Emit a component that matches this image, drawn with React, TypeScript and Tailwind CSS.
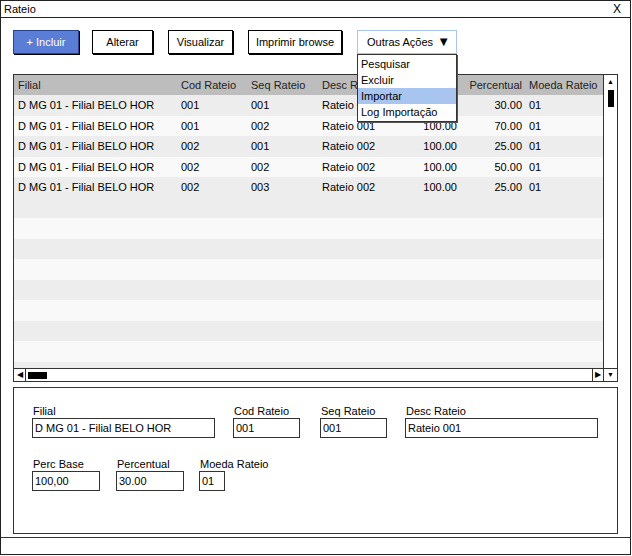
import React from "react";

const rows = [
  ["D MG 01 - Filial BELO HOR", "001", "001", "Rateio 001", "100.00", "30.00", "01"],
  ["D MG 01 - Filial BELO HOR", "001", "002", "Rateio 001", "100.00", "70.00", "01"],
  ["D MG 01 - Filial BELO HOR", "002", "001", "Rateio 002", "100.00", "25.00", "01"],
  ["D MG 01 - Filial BELO HOR", "002", "002", "Rateio 002", "100.00", "50.00", "01"],
  ["D MG 01 - Filial BELO HOR", "002", "003", "Rateio 002", "100.00", "25.00", "01"],
];

const cols = "grid grid-cols-[163px_70px_71px_70px_72px_65px_83px]";

function Cells({ r }: { r: string[] }) {
  return (
    <>
      <div className="pl-1 whitespace-nowrap overflow-hidden">{r[0]}</div>
      <div className="pl-1">{r[1]}</div>
      <div className="pl-1">{r[2]}</div>
      <div className="pl-1 whitespace-nowrap">{r[3]}</div>
      <div className="pr-[3px] text-right">{r[4]}</div>
      <div className="pr-[3px] text-right">{r[5]}</div>
      <div className="pl-1 whitespace-nowrap">{r[6]}</div>
    </>
  );
}

function Btn({ label, w }: { label: string; w: string }) {
  return (
    <div className={`${w} h-6 flex items-center justify-center border border-black bg-white shadow-[1px_1px_0_#000] whitespace-nowrap`}>
      {label}
    </div>
  );
}

function Field({ label, value, w }: { label: string; value: string; w: string }) {
  return (
    <div className="flex flex-col">
      <span className="pl-[1px] leading-[14px]">{label}</span>
      <div className={`${w} h-5 border border-[#333] px-[2px] flex items-center`}>{value}</div>
    </div>
  );
}

export default function App() {
  const empty = Array.from({ length: 9 });
  return (
    <div
      className="relative w-[632px] h-[556px] bg-white text-[11px] text-black"
      style={{ fontFamily: '"Liberation Sans", Arial, sans-serif' }}
    >
      <div className="w-[631px] h-[555px] border border-[#222] flex flex-col">
        {/* title */}
        <div className="h-[17px] border-b border-[#222] flex items-center justify-between pl-[3px] pr-[9px] shrink-0">
          <span>Rateio</span>
          <span className="text-[12px]">X</span>
        </div>

        {/* toolbar */}
        <div className="flex items-start pl-[12px] pt-[12px] h-[56px] shrink-0">
          <div className="h-6 w-[66px] flex items-center justify-center bg-[#5a7ed6] text-white border border-[#27428f] shadow-[1px_1px_0_#000]">
            + Incluir
          </div>
          <div className="ml-[13px]">
            <Btn label="Alterar" w="w-[61px]" />
          </div>
          <div className="ml-[15px]">
            <Btn label="Visualizar" w="w-[65px]" />
          </div>
          <div className="ml-[15px]">
            <Btn label="Imprimir browse" w="w-[94px]" />
          </div>
          <div className="ml-[15px] h-6 w-[100px] border border-[#a8c3ee] bg-white flex items-center justify-between pl-[9px] pr-[6px] whitespace-nowrap">
            <span>Outras Ações</span>
            <span className="text-[13px]">▼</span>
          </div>
        </div>

        {/* grid */}
        <div className="mx-[12px] h-[308px] border border-[#333] flex flex-col shrink-0">
          <div className="flex flex-1 min-h-0">
            <div className="flex-1 flex flex-col overflow-hidden">
              <div className={`${cols} h-5 items-center bg-[#bdbdbd] text-[#222] shrink-0`}>
                <Cells r={["Filial", "Cod Rateio", "Seq Rateio", "Desc Rateio", "Perc Base", "Percentual", "Moeda Rateio"]} />
              </div>
              {rows.map((r, i) => (
                <div
                  key={i}
                  className={`${cols} h-[20.5px] items-center shrink-0 ${i % 2 === 0 ? "bg-[#ededed]" : "bg-[#f9f9f9]"}`}
                >
                  <Cells r={r} />
                </div>
              ))}
              {empty.map((_, i) => (
                <div
                  key={i}
                  className={`h-[20.5px] shrink-0 ${i % 2 === 0 ? "bg-[#ededed]" : "bg-[#f9f9f9]"}`}
                />
              ))}
            </div>
            {/* vertical scrollbar */}
            <div className="w-[14px] border-l border-[#333] flex flex-col items-center bg-white shrink-0">
              <span className="text-[7px] leading-[12px] mt-[1px]">▲</span>
              <div className="w-[6px] h-[17px] bg-black mt-[2px]" />
            </div>
          </div>
          {/* horizontal scrollbar */}
          <div className="h-[13px] border-t border-[#333] flex shrink-0">
            <div className="flex-1 flex items-center bg-white">
              <span className="text-[8px] w-[12px] border-r border-[#333] h-full flex items-center justify-center">◀</span>
              <div className="w-[19px] h-[7px] bg-black ml-[2px]" />
              <div className="flex-1" />
              <span className="text-[8px] w-[11px] border-l border-[#333] h-full flex items-center justify-center">▶</span>
            </div>
            <div className="w-[14px] border-l border-[#333] flex items-center justify-center text-[7px]">▼</div>
          </div>
        </div>

        {/* detail */}
        <div className="mx-[12px] mt-[5px] h-[147px] border border-[#333] shrink-0 pl-[18px] pt-[16px] flex flex-col gap-[19px]">
          <div className="flex">
            <Field label="Filial" value="D MG 01 - Filial BELO HOR" w="w-[183px]" />
            <div className="ml-[18px]">
              <Field label="Cod Rateio" value="001" w="w-[67px]" />
            </div>
            <div className="ml-[20px]">
              <Field label="Seq Rateio" value="001" w="w-[67px]" />
            </div>
            <div className="ml-[18px]">
              <Field label="Desc Rateio" value="Rateio 001" w="w-[193px]" />
            </div>
          </div>
          <div className="flex">
            <Field label="Perc Base" value="100,00" w="w-[68px]" />
            <div className="ml-[16px]">
              <Field label="Percentual" value="30.00" w="w-[68px]" />
            </div>
            <div className="ml-[15px]">
              <Field label="Moeda Rateio" value="01" w="w-[26px]" />
            </div>
          </div>
        </div>

        <div className="flex-1" />
        <div className="h-[17px] border-t border-[#333] shrink-0" />
      </div>

      {/* dropdown menu */}
      <div className="absolute left-[357px] top-[54px] w-[100px] border border-[#333] bg-white flex flex-col py-[1px] shadow-[1px_1px_0_#555]">
        <div className="h-4 px-[3px] flex items-center">Pesquisar</div>
        <div className="h-4 px-[3px] flex items-center">Excluir</div>
        <div className="h-4 px-[3px] flex items-center bg-[#a8c5ef]">Importar</div>
        <div className="h-4 px-[3px] flex items-center">Log Importação</div>
      </div>
    </div>
  );
}
